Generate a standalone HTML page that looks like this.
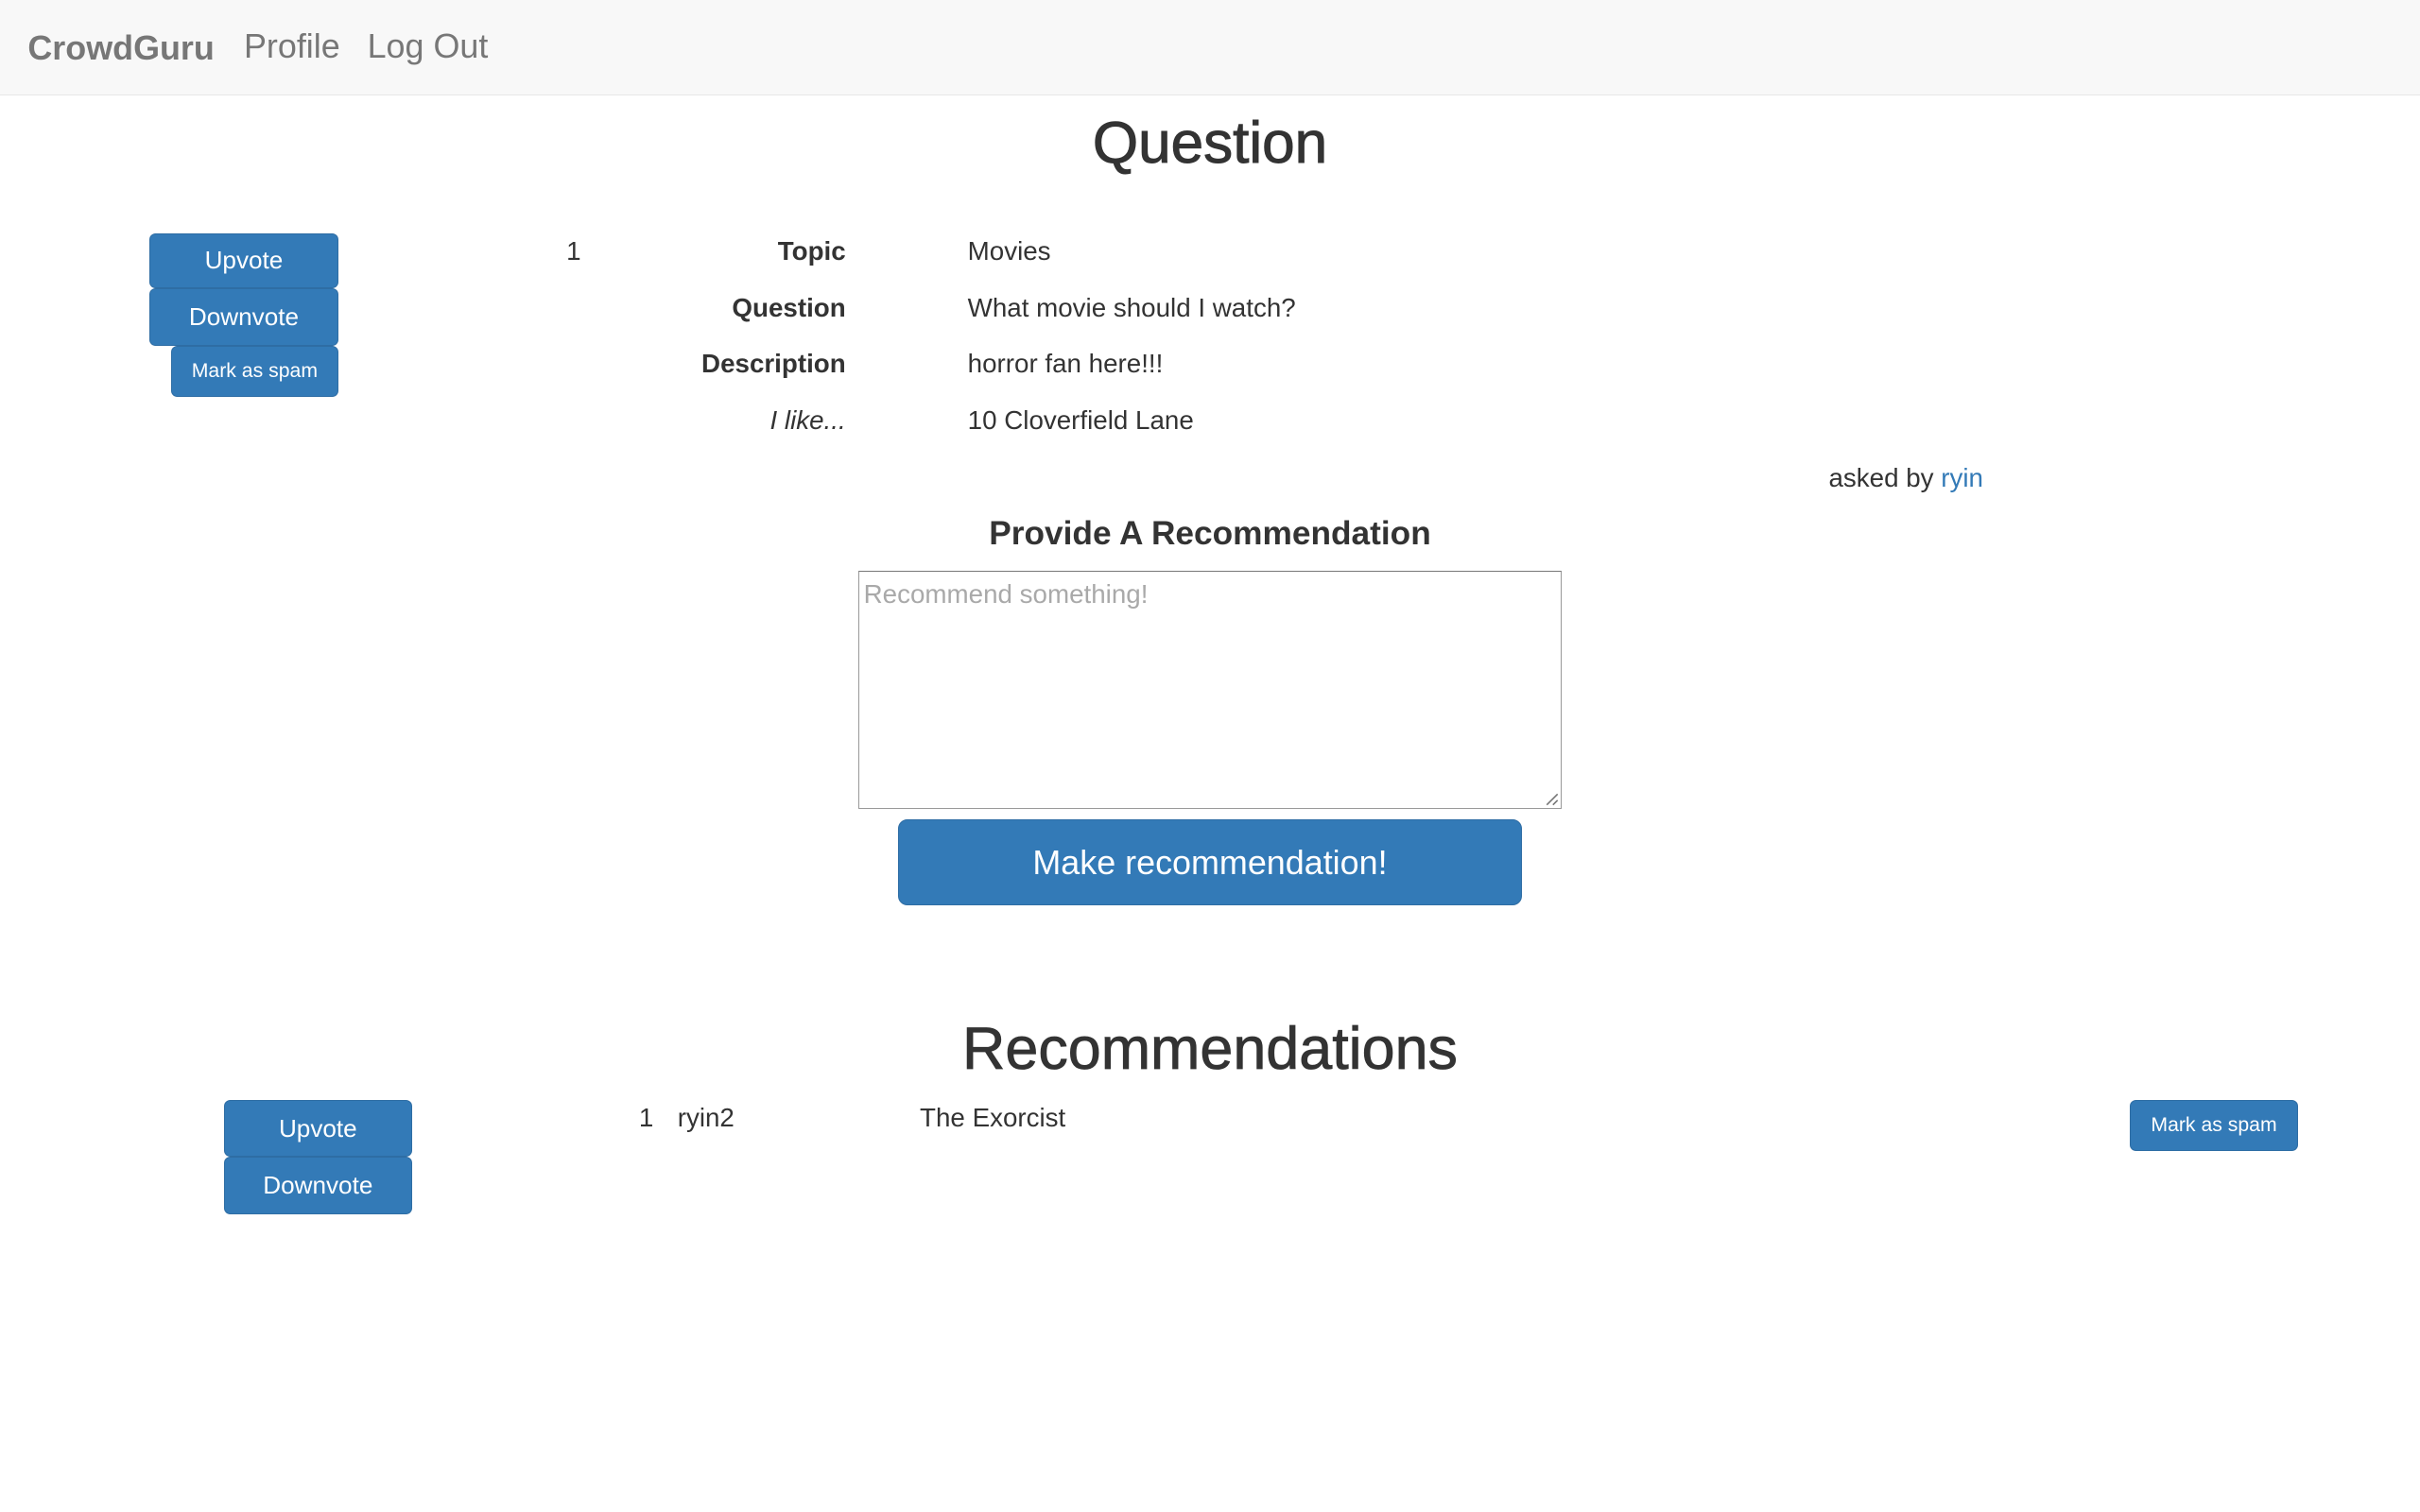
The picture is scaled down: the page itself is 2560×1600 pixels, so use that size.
<!DOCTYPE html>
<html><head><meta charset="utf-8"><style>
html,body{margin:0;padding:0;background:#fff;overflow:hidden;}
#w{zoom:1.63265;position:relative;width:1568px;height:980px;font-family:"Liberation Sans",Arial,sans-serif;color:#333;}
.a{position:absolute;white-space:nowrap;}
.nav{position:absolute;left:0;top:0;width:1568px;height:62px;background:#f8f8f8;border-bottom:1px solid #e7e7e7;box-sizing:border-box;}
.btn{position:absolute;background:#337ab7;border:1px solid #2e6da4;border-radius:4px;color:#fff;box-sizing:border-box;text-align:center;display:flex;align-items:center;justify-content:center;}
.lbl{position:absolute;right:1020px;font-weight:bold;font-size:17px;line-height:20px;text-align:right;}
.val{position:absolute;left:627px;font-size:17px;line-height:20px;white-space:nowrap;}
.c{position:absolute;left:0;width:1568px;text-align:center;}
</style></head><body><div id="w">
<div class="nav"></div>
<div class="a" style="left:18px;top:17px;font-size:22px;font-weight:bold;color:#777;line-height:28px;">CrowdGuru</div>
<div class="a" style="left:158px;top:16px;font-size:22px;color:#777;line-height:28px;">Profile</div>
<div class="a" style="left:238px;top:16px;font-size:22px;color:#777;line-height:28px;">Log Out</div>
<div class="c" style="top:70px;font-size:38px;line-height:46px;-webkit-text-stroke:0.6px #333;">Question</div>

<div class="btn" style="left:97px;top:151px;width:122px;height:36px;font-size:16px;">Upvote</div>
<div class="btn" style="left:97px;top:187px;width:122px;height:37px;font-size:16px;">Downvote</div>
<div class="btn" style="left:111px;top:224px;width:108px;height:33px;font-size:13px;">Mark as spam</div>

<div class="a" style="left:367px;top:153px;font-size:17px;line-height:20px;">1</div>
<div class="lbl" style="top:153px;">Topic</div><div class="val" style="top:153px;">Movies</div>
<div class="lbl" style="top:190px;">Question</div><div class="val" style="top:190px;">What movie should I watch?</div>
<div class="lbl" style="top:226px;">Description</div><div class="val" style="top:226px;">horror fan here!!!</div>
<div class="lbl" style="top:263px;font-weight:normal;font-style:italic;">I like...</div><div class="val" style="top:263px;">10 Cloverfield Lane</div>
<div class="a" style="right:283px;top:300px;font-size:17px;line-height:20px;">asked by <span style="color:#337ab7">ryin</span></div>

<div class="c" style="top:333px;font-size:21.6px;line-height:26px;font-weight:bold;">Provide A Recommendation</div>
<div class="a" style="left:556px;top:370px;width:456px;height:154px;border:1px solid #999;border-top-color:#777;box-sizing:border-box;">
<div style="position:absolute;left:3px;top:5px;font-size:17px;color:#a9a9a9;">Recommend something!</div>
<svg style="position:absolute;right:1px;bottom:1px" width="10" height="10"><path d="M9 2L2 9M9 6L6 9" stroke="#777" stroke-width="1"/></svg>
</div>
<div class="btn" style="left:582px;top:531px;width:404px;height:56px;border-radius:6px;font-size:22px;">Make recommendation!</div>

<div class="c" style="top:657px;font-size:38.5px;line-height:46px;-webkit-text-stroke:0.5px #333;">Recommendations</div>
<div class="btn" style="left:145px;top:713px;width:122px;height:37px;font-size:16px;">Upvote</div>
<div class="btn" style="left:145px;top:750px;width:122px;height:37px;font-size:16px;">Downvote</div>
<div class="a" style="left:414px;top:715px;font-size:17px;line-height:20px;">1</div>
<div class="a" style="left:439px;top:715px;font-size:17px;line-height:20px;">ryin2</div>
<div class="a" style="left:596px;top:715px;font-size:17px;line-height:20px;">The Exorcist</div>
<div class="btn" style="left:1380px;top:713px;width:109px;height:33px;font-size:13px;">Mark as spam</div>
</div></body></html>
